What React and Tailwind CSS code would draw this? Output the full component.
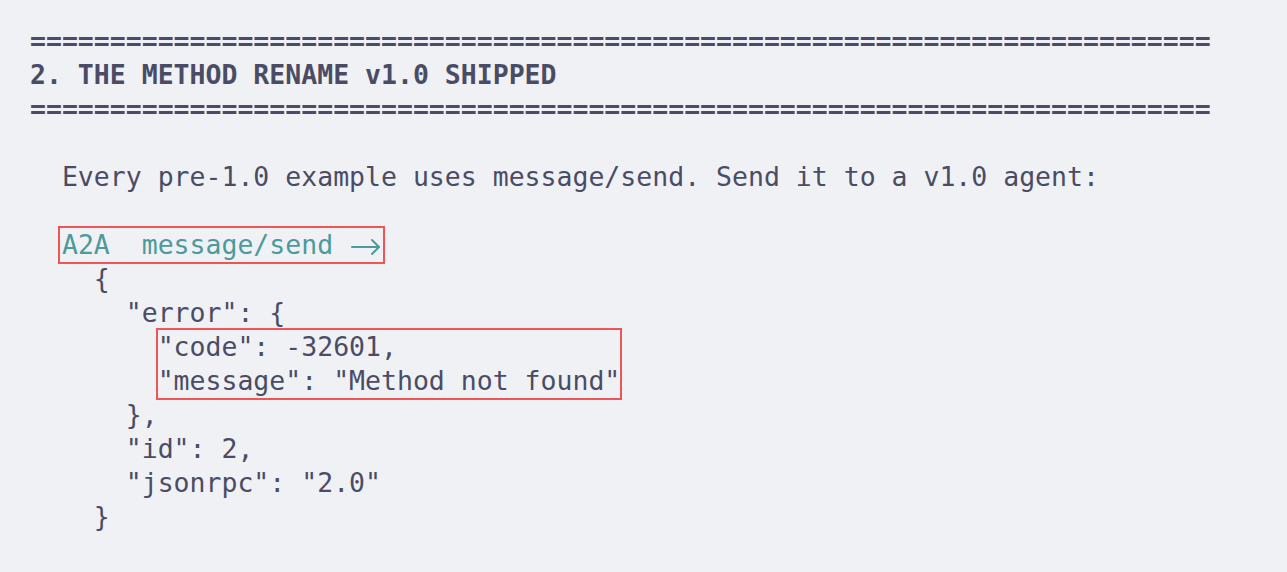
const rule = "=".repeat(74);

function Arrow() {
  return (
    <svg
      width="32"
      height="20"
      viewBox="0 0 32 20"
      className="inline-block align-[-3px]"
      fill="none"
      stroke="currentColor"
      strokeWidth="2"
      strokeLinecap="round"
      strokeLinejoin="round"
    >
      <path d="M3 10h27" />
      <path d="M23 3l7 7-7 7" />
    </svg>
  );
}

export default function App() {
  return (
    <div className="min-h-screen bg-[#f0f1f5] pt-6 pl-[30px]">
      <pre className="font-['DejaVu_Sans_Mono',monospace] text-[26.5px] leading-[34px] text-[#4a4c66]">
        <span className="font-bold">
          {rule + "\n2. THE METHOD RENAME v1.0 SHIPPED\n" + rule}
        </span>
        {"\n\n  Every pre-1.0 example uses message/send. Send it to a v1.0 agent:\n\n  "}
        <span className="inline-block -mx-[2px] px-[2px] text-[#4b9a9c] outline-2 outline-[#f15454]">
          {"A2A  message/send "}
          <Arrow />
        </span>
        {"\n    {\n      \"error\": {\n        "}
        <span className="inline-block outline-2 outline-[#f15454]">
          {"\"code\": -32601,\n\"message\": \"Method not found\""}
        </span>
        {"\n      },\n      \"id\": 2,\n      \"jsonrpc\": \"2.0\"\n    }"}
      </pre>
    </div>
  );
}
